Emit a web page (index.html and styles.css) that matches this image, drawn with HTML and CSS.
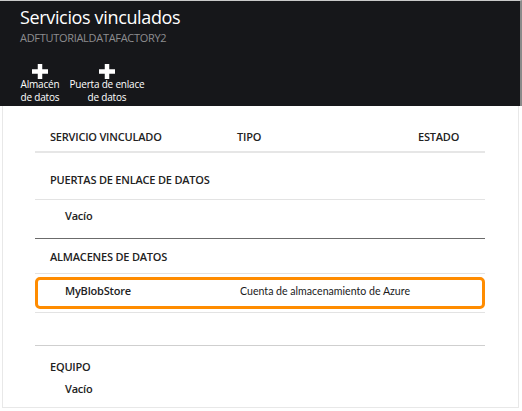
FILE: index.html
```html
<!DOCTYPE html>
<html>
<head>
<meta charset="utf-8">
<link rel="stylesheet" href="styles.css">
</head>
<body>
<div class="blade">
  <div class="header">
    <div class="title">Servicios vinculados</div>
    <div class="subtitle">ADFTUTORIALDATAFACTORY2</div>
    <div class="commands">
      <div class="cmd cmd-store">
        <svg class="plus" viewBox="0 0 16 15" width="16" height="15"><rect x="5.75" y="0" width="4.5" height="15" fill="#fff"/><rect x="0" y="5.25" width="16" height="4.5" fill="#fff"/></svg>
        <div class="cmd-label">Almacén<br>de datos</div>
      </div>
      <div class="cmd cmd-gateway">
        <svg class="plus" viewBox="0 0 16 15" width="16" height="15"><rect x="5.75" y="0" width="4.5" height="15" fill="#fff"/><rect x="0" y="5.25" width="16" height="4.5" fill="#fff"/></svg>
        <div class="cmd-label">Puerta de enlace<br>de datos</div>
      </div>
    </div>
  </div>
  <div class="panel">
    <div class="table">
      <div class="colhead">
        <span class="c1">SERVICIO VINCULADO</span>
        <span class="c2">TIPO</span>
        <span class="c3">ESTADO</span>
      </div>
      <div class="rule rule-head"></div>
      <div class="group g-gateways">PUERTAS DE ENLACE DE DATOS</div>
      <div class="rule rule-gw"></div>
      <div class="item i-gw-empty">Vacío</div>
      <div class="rule rule-dark"></div>
      <div class="group g-stores">ALMACENES DE DATOS</div>
      <div class="rule rule-st"></div>
      <div class="selected">
        <span class="c1">MyBlobStore</span>
        <span class="c2">Cuenta de almacenamiento de Azure</span>
      </div>
      <div class="rule rule-after"></div>
      <div class="rule rule-comp"></div>
      <div class="group g-comp">EQUIPO</div>
      <div class="item i-comp-empty">Vacío</div>
    </div>
  </div>
</div>
</body>
</html>
```
FILE: styles.css
```css
html, body {
  margin: 0;
  padding: 0;
  background: #ffffff;
}
body {
  font-family: "Open Sans", "Noto Sans", sans-serif;
  color: #222222;
}
.blade {
  width: 522px;
  height: 411px;
  overflow: hidden;
}
.header {
  width: 500px;
  height: 105px;
  padding-left: 20px;
  background: #16171a;
  border-top: 1px solid #c9c9c9;
  border-right: 2px solid #8a8a8a;
}
.title {
  padding-top: 4px;
  font-size: 18px;
  line-height: 24.6px;
  color: #ffffff;
  letter-spacing: -0.35px;
}
.subtitle {
  font-size: 11px;
  line-height: 16px;
  color: #8d8d8f;
  letter-spacing: -0.3px;
}
.commands {
  display: flex;
  margin-top: 18px;
}
.cmd {
  display: flex;
  flex-direction: column;
  align-items: center;
}
.cmd-store {
  width: 40px;
}
.cmd-gateway {
  width: 80px;
  margin-left: 7px;
}
.plus {
  display: block;
}
.cmd-label {
  margin-top: -1px;
  font-size: 10px;
  line-height: 13.7px;
  color: #ffffff;
  text-align: center;
  white-space: nowrap;
  letter-spacing: -0.2px;
}
.panel {
  margin-left: 2px;
  width: 515px;
  height: 301px;
  border: 1px solid #e8e8e8;
  border-top: none;
}
.table {
  margin-left: 32px;
  width: 450px;
  font-size: 11px;
  line-height: 16px;
  font-weight: 600;
  letter-spacing: -0.2px;
}
.colhead {
  display: flex;
  padding-top: 23px;
  margin-bottom: 6px;
}
.colhead .c1 {
  margin-left: 15px;
  width: 187px;
}
.colhead .c2 {
  width: 181px;
}
.rule {
  height: 1px;
  background: #e3e3e3;
}
.rule-head {
  height: 2px;
  background: #e6e6e6;
}
.group {
  padding-left: 15px;
}
.g-gateways {
  margin-top: 19px;
  margin-bottom: 11px;
}
.item {
  padding-left: 30px;
}
.i-gw-empty {
  margin-top: 8px;
  margin-bottom: 14px;
}
.rule-dark {
  background: #6b6b6b;
}
.g-stores {
  margin-top: 10px;
  margin-bottom: 8px;
}
.selected {
  margin-top: 3px;
  padding: 3px 0 7px 0;
  display: flex;
  border: 3px solid #ff8c00;
  border-radius: 5px;
}
.selected .c1 {
  margin-left: 27px;
  width: 175px;
}
.selected .c2 {
  font-family: "Lato", "Open Sans", sans-serif;
  font-size: 10.6px;
  font-weight: 400;
  letter-spacing: 0;
  color: #1a1a1a;
}
.rule-after {
  margin-top: 3px;
}
.rule-comp {
  margin-top: 32px;
  background: #cfcfcf;
}
.g-comp {
  margin-top: 13px;
}
.i-comp-empty {
  margin-top: 6px;
}
```
